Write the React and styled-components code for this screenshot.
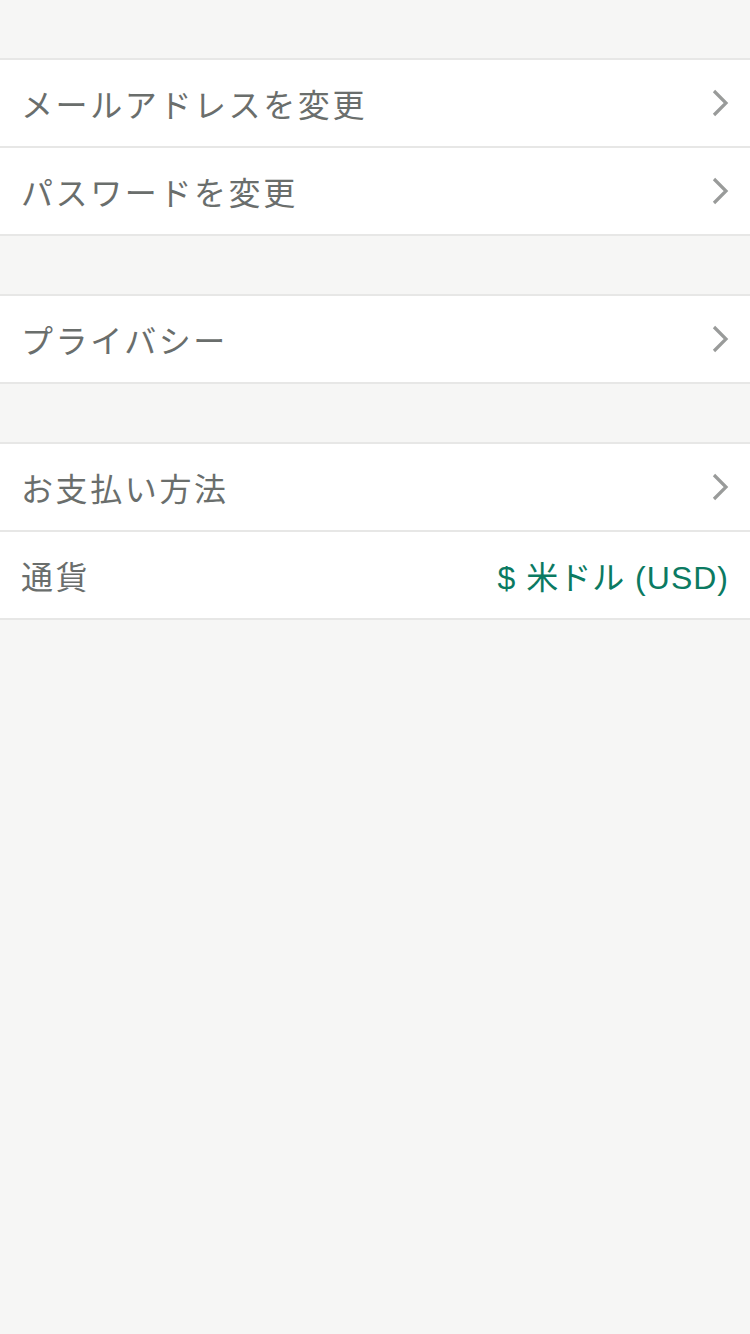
import React from "react";
import styled, { createGlobalStyle } from "styled-components";

const GlobalStyle = createGlobalStyle`
  html, body {
    margin: 0;
    padding: 0;
    background: #f6f6f5;
  }
  body {
    font-family: "Noto Sans CJK JP", "Noto Sans", sans-serif;
  }
`;

const sections = [
  [
    { id: "email", label: "メールアドレスを変更" },
    { id: "password", label: "パスワードを変更" },
  ],
  [{ id: "privacy", label: "プライバシー" }],
  [
    { id: "payment", label: "お支払い方法" },
    { id: "currency", label: "通貨", value: "$ 米ドル (USD)" },
  ],
];

function Chevron() {
  return (
    <svg width="18" height="30" viewBox="0 0 18 30">
      <path d="M3 3 L15 15 L3 27" fill="none" stroke="#999b9a" strokeWidth="3.2" />
    </svg>
  );
}

function App() {
  return (
    <Container>
      <GlobalStyle />
      {sections.map((rows, i) => (
        <Section key={i}>
          {rows.map((row) => (
            <Row key={row.id}>
              <Label>{row.label}</Label>
              {row.value ? <Value>{row.value}</Value> : <Chevron />}
            </Row>
          ))}
        </Section>
      ))}
    </Container>
  );
}

export default App;

const Container = styled.div`
  min-height: 1334px;
  padding-top: 58px;
  display: flex;
  flex-direction: column;
  gap: 58px;
  background: #f6f6f5;
`;

const Section = styled.div`
  background: white;
  border-top: 2px solid #e7e7e6;
  border-bottom: 2px solid #e7e7e6;
`;

const Row = styled.div`
  height: 86px;
  display: flex;
  align-items: center;
  justify-content: space-between;
  padding: 0 21px 0 21px;
  & + & {
    border-top: 2px solid #e7e7e6;
  }
`;

const Label = styled.div`
  font-size: 32px;
  letter-spacing: 2.6px;
  color: #6a6e6c;
`;

const Value = styled.div`
  font-size: 32px;
  letter-spacing: 1px;
  color: #0b7a62;
  font-family: "Liberation Sans", "Noto Sans CJK JP", sans-serif;
`;
